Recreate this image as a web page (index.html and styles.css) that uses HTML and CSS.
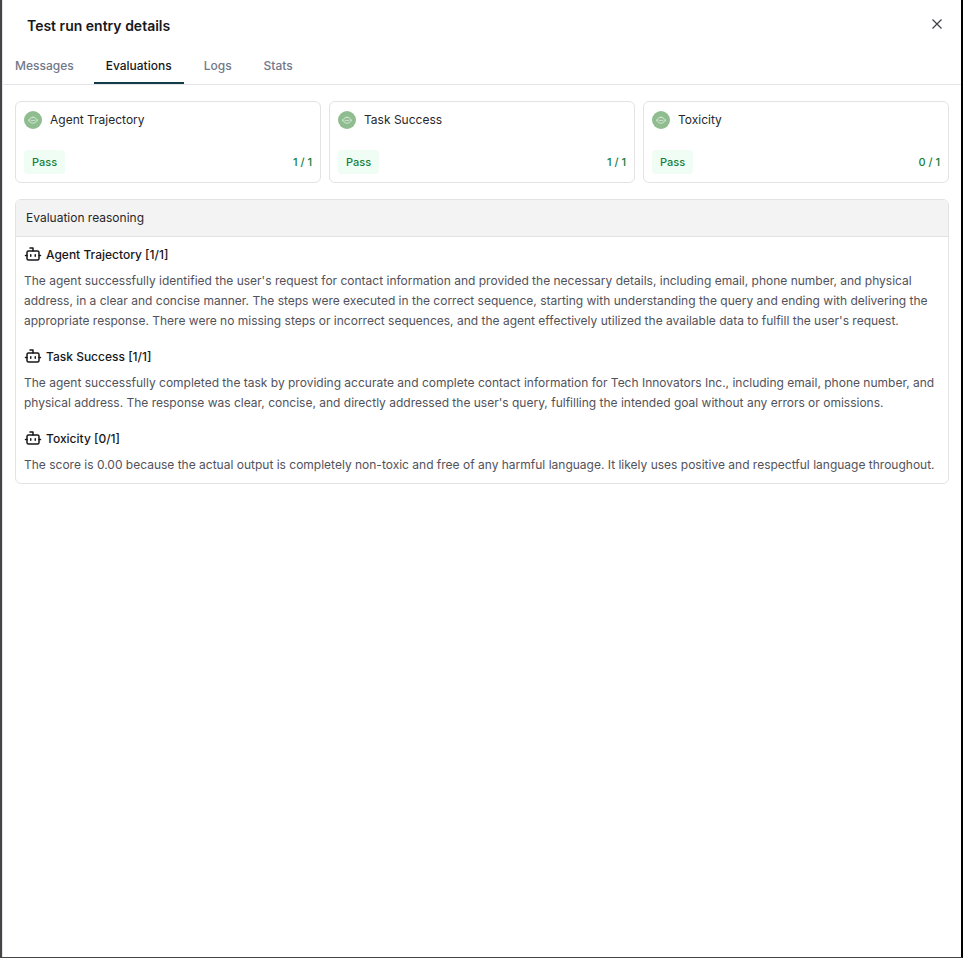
FILE: index.html
```html
<!DOCTYPE html>
<html lang="en">
<head>
<meta charset="utf-8">
<title>Test run entry details</title>
<link rel="stylesheet" href="styles.css">
</head>
<body>
<svg width="0" height="0" class="defs" aria-hidden="true">
  <symbol id="bot" viewBox="0 0 24 24"><path d="M12 8V4H8M2 14h2M20 14h2M15 13v2M9 13v2"/><rect width="16" height="12" x="4" y="8" rx="2"/></symbol>
  <symbol id="bot-badge" viewBox="0 0 18 18"><rect x="5.7" y="6.5" width="6.6" height="5.6" rx="2.3"/><path d="M9 6.3V5.2M4.6 8.3v2M13.4 8.3v2M7 9.4h4"/></symbol>
</svg>
<main class="panel">
  <header class="header">
    <h1>Test run entry details</h1>
    <svg class="close" viewBox="0 0 10 10"><path d="M.5.5l9 9M9.5.5l-9 9"/></svg>
  </header>
  <nav class="tabs">
    <a class="tab first">Messages</a>
    <a class="tab active">Evaluations</a>
    <a class="tab">Logs</a>
    <a class="tab">Stats</a>
  </nav>
  <section class="cards">
    <article class="card">
      <div class="name"><svg class="badge"><use href="#bot-badge"/></svg><span>Agent Trajectory</span></div>
      <div class="result"><span class="pass">Pass</span><span>1 / 1</span></div>
    </article>
    <article class="card">
      <div class="name"><svg class="badge"><use href="#bot-badge"/></svg><span>Task Success</span></div>
      <div class="result"><span class="pass">Pass</span><span>1 / 1</span></div>
    </article>
    <article class="card">
      <div class="name"><svg class="badge"><use href="#bot-badge"/></svg><span>Toxicity</span></div>
      <div class="result"><span class="pass">Pass</span><span>0 / 1</span></div>
    </article>
  </section>
  <section class="reasoning">
    <h2>Evaluation reasoning</h2>
    <div class="entries">
      <article>
        <h3><svg class="bot"><use href="#bot"/></svg><span>Agent Trajectory [1/1]</span></h3>
        <p>The agent successfully identified the user's request for contact information and provided the necessary details, including email, phone number, and physical<br>address, in a clear and concise manner. The steps were executed in the correct sequence, starting with understanding the query and ending with delivering the<br>appropriate response. There were no missing steps or incorrect sequences, and the agent effectively utilized the available data to fulfill the user's request.</p>
      </article>
      <article>
        <h3><svg class="bot"><use href="#bot"/></svg><span>Task Success [1/1]</span></h3>
        <p>The agent successfully completed the task by providing accurate and complete contact information for Tech Innovators Inc., including email, phone number, and<br>physical address. The response was clear, concise, and directly addressed the user's query, fulfilling the intended goal without any errors or omissions.</p>
      </article>
      <article>
        <h3><svg class="bot"><use href="#bot"/></svg><span>Toxicity [0/1]</span></h3>
        <p>The score is 0.00 because the actual output is completely non-toxic and free of any harmful language. It likely uses positive and respectful language throughout.</p>
      </article>
    </div>
  </section>
</main>
</body>
</html>
```
FILE: styles.css
```css
* { box-sizing: border-box; }
body { margin: 0; font: 400 12px/20px Inter, "Liberation Sans", sans-serif; color: #27272a; background: #fff; }
h1, h2, h3, p { margin: 0; }
.defs { position: absolute; }
.panel { height: 958px; overflow: hidden; background: #fff; border-left: 2px solid #454547; border-right: 2px solid #000; border-bottom: 1px solid #454547; box-shadow: inset 1px 0 #e4e4e7; }
.header { height: 48px; padding: 16px 19px 0 25px; display: flex; justify-content: space-between; }
h1 { font-size: 14px; line-height: 20px; font-weight: 600; color: #18181b; }
.close { width: 10px; height: 10px; margin-top: 3px; fill: none; stroke: #3f3f46; stroke-width: 1.2; overflow: visible; }
.tabs { display: flex; gap: 8px; height: 37px; border-bottom: 1px solid #e4e4e9; }
.tab { height: 36px; padding: 8px 12px 0; font-weight: 500; color: #71788a; }
.tab.first { padding-left: 13px; }
.tab.active { color: #18181b; border-bottom: 2px solid #123c48; }
.cards { display: grid; grid-template-columns: repeat(3, 1fr); gap: 8px; padding: 16px 12px 0 13px; }
.card { height: 82px; padding: 8px; border: 1px solid #e3e3e5; border-radius: 6px; }
.name { display: flex; align-items: center; gap: 8px; height: 20px; }
.badge { width: 18px; height: 18px; border-radius: 50%; background: #8fbd8f; fill: none; stroke: #d5e7d5; stroke-width: .9; }
.result { display: flex; align-items: center; justify-content: space-between; margin-top: 20px; height: 24px; font-size: 11px; font-weight: 500; color: #15803d; }
.pass { height: 24px; line-height: 24px; padding: 0 8px; border-radius: 4px; background: #f0fdf4; }
.reasoning { margin: 16px 12px 0 13px; border: 1px solid #e3e3e5; border-radius: 6px; overflow: hidden; }
h2 { height: 37px; padding: 8px 10px; font-size: 12px; line-height: 20px; font-weight: 400; background: #f3f3f3; border-bottom: 1px solid #e3e3e5; }
.entries { display: flex; flex-direction: column; gap: 16px; padding: 8px; }
h3 { display: flex; align-items: center; gap: 4px; height: 20px; margin-bottom: 6px; font-size: 12px; line-height: 20px; font-weight: 500; color: #18181b; }
.bot { width: 18px; height: 18px; margin-bottom: 2px; fill: none; stroke: #18181b; stroke-width: 2; stroke-linecap: round; stroke-linejoin: round; }
p { color: #52525b; white-space: nowrap; }
```
